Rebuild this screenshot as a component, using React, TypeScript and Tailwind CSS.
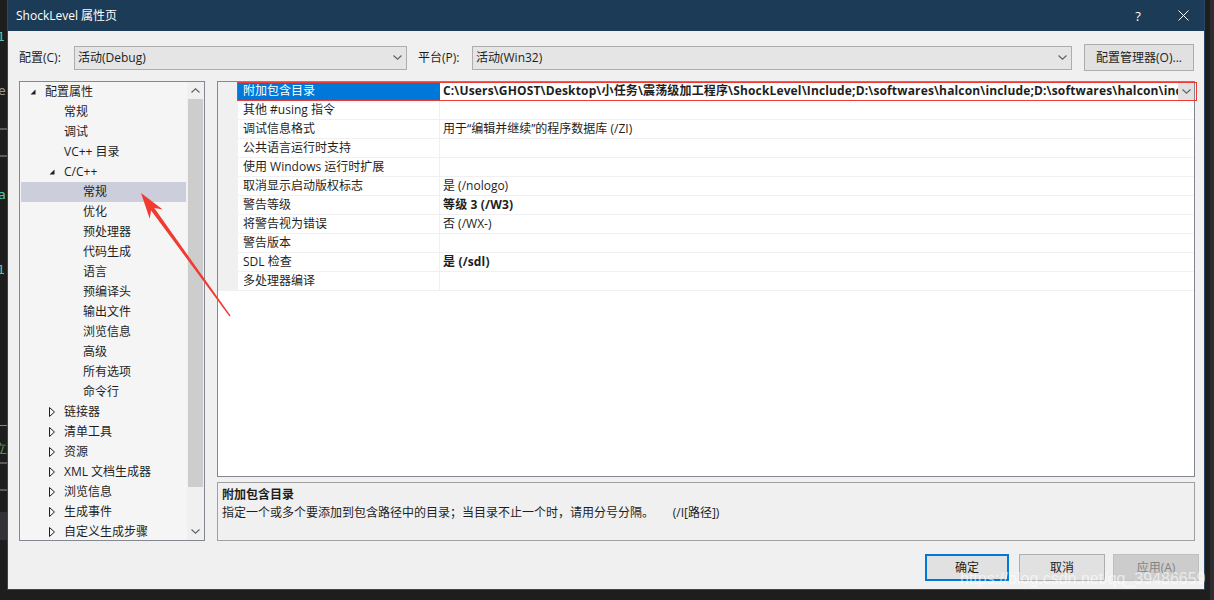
import React from 'react';

const font = "font-['Open_Sans','Noto_Sans_CJK_SC',sans-serif]";

type TreeItem = { label: string; level: number; state?: 'open' | 'closed'; selected?: boolean };

const treeItems: TreeItem[] = [
  { label: '配置属性', level: 0, state: 'open' },
  { label: '常规', level: 1 },
  { label: '调试', level: 1 },
  { label: 'VC++ 目录', level: 1 },
  { label: 'C/C++', level: 1, state: 'open' },
  { label: '常规', level: 2, selected: true },
  { label: '优化', level: 2 },
  { label: '预处理器', level: 2 },
  { label: '代码生成', level: 2 },
  { label: '语言', level: 2 },
  { label: '预编译头', level: 2 },
  { label: '输出文件', level: 2 },
  { label: '浏览信息', level: 2 },
  { label: '高级', level: 2 },
  { label: '所有选项', level: 2 },
  { label: '命令行', level: 2 },
  { label: '链接器', level: 1, state: 'closed' },
  { label: '清单工具', level: 1, state: 'closed' },
  { label: '资源', level: 1, state: 'closed' },
  { label: 'XML 文档生成器', level: 1, state: 'closed' },
  { label: '浏览信息', level: 1, state: 'closed' },
  { label: '生成事件', level: 1, state: 'closed' },
  { label: '自定义生成步骤', level: 1, state: 'closed' },
];

const indent = ['pl-[5px]', 'pl-[24px]', 'pl-[43px]'];

type Prop = { name: string; value?: string; bold?: boolean; selected?: boolean };

const props: Prop[] = [
  {
    name: '附加包含目录',
    value:
      'C:\\Users\\GHOST\\Desktop\\小任务\\震荡级加工程序\\ShockLevel\\Include;D:\\softwares\\halcon\\include;D:\\softwares\\halcon\\include\\halconcpp;%(AdditionalIncludeDirectories)',
    bold: true,
    selected: true,
  },
  { name: '其他 #using 指令' },
  { name: '调试信息格式', value: '用于“编辑并继续”的程序数据库 (/ZI)' },
  { name: '公共语言运行时支持' },
  { name: '使用 Windows 运行时扩展' },
  { name: '取消显示启动版权标志', value: '是 (/nologo)' },
  { name: '警告等级', value: '等级 3 (/W3)', bold: true },
  { name: '将警告视为错误', value: '否 (/WX-)' },
  { name: '警告版本' },
  { name: 'SDL 检查', value: '是 (/sdl)', bold: true },
  { name: '多处理器编译' },
];

const Chevron = ({ up = false }: { up?: boolean }) => (
  <svg width="9" height="5" viewBox="0 0 9 5" className="shrink-0">
    <path
      d={up ? 'M0.5 4.5 L4.5 0.8 L8.5 4.5' : 'M0.5 0.5 L4.5 4.2 L8.5 0.5'}
      fill="none"
      stroke="#606060"
      strokeWidth="1.1"
    />
  </svg>
);

const Combo = ({ text, width }: { text: string; width: string }) => (
  <div className={`flex h-[24px] ${width} items-center justify-between border border-[#adadad] bg-[#e5e5e5] pl-[3px] pr-[4px]`}>
    <span className="text-[12px] leading-[16px] text-[#1e1e1e]">{text}</span>
    <Chevron />
  </div>
);

const TreeRow = ({ item }: { item: TreeItem }) => (
  <div
    className={`flex h-[20px] shrink-0 items-center ${indent[item.level]} ${item.selected ? 'bg-[#cccedb]' : ''}`}
  >
    <div className="flex w-[19px] shrink-0 items-center pl-[4px]">
      {item.state === 'open' && (
        <svg width="6" height="6" viewBox="0 0 6 6">
          <polygon points="5.5,0.5 5.5,5.5 0.5,5.5" fill="#1e1e1e" />
        </svg>
      )}
      {item.state === 'closed' && (
        <svg width="7" height="10" viewBox="0 0 7 10">
          <polygon points="0.5,0.5 5.5,5 0.5,9.5" fill="none" stroke="#1e1e1e" strokeWidth="1" />
        </svg>
      )}
    </div>
    <span className="whitespace-nowrap text-[12px] leading-[16px] text-[#1e1e1e]">{item.label}</span>
  </div>
);

const PropRow = ({ p }: { p: Prop }) => (
  <div className="flex h-[19px] shrink-0">
    <div className="w-[20px] shrink-0 bg-[#f0f0f0]" />
    <div
      className={`flex w-[202px] shrink-0 items-center border-r border-b pl-[5px] text-[12px] leading-[16px] ${
        p.selected ? 'border-[#0078d7] bg-[#0078d7] text-white' : 'border-[#f0f0f0] text-[#1e1e1e]'
      }`}
    >
      <span className="whitespace-nowrap">{p.name}</span>
    </div>
    <div className="flex min-w-0 flex-1 items-center border-b border-[#f0f0f0] pl-[3px]">
      <span
        className={`min-w-0 flex-1 overflow-hidden whitespace-nowrap text-[12px] leading-[16px] text-[#1e1e1e] ${
          p.bold ? 'font-bold tracking-[0.15px]' : ''
        }`}
      >
        {p.value ?? ''}
      </span>
      {p.selected && (
        <div className="flex h-[17px] w-[16px] shrink-0 items-center justify-center bg-[#e1e1e1]">
          <Chevron />
        </div>
      )}
    </div>
  </div>
);

const EditorStrip = () => (
  <div className="flex h-[600px] w-[7px] shrink-0 flex-col overflow-hidden bg-[#1e1e1e] font-['DejaVu_Sans_Mono',monospace] text-[13px] leading-[14px]">
    <span className="mt-[30px] -ml-[3px] text-[#4ec9b0]">1</span>
    <span className="mt-[40px] -ml-[2px] text-[#9a9a9a]">e</span>
    <div className="mt-[30px] h-[2px] w-full bg-[#5a5a5a]" />
    <div className="mt-[25px] h-[2px] w-full bg-[#5a5a5a]" />
    <span className="mt-[31px] -ml-[2px] text-[#4ec9b0]">a</span>
    <span className="mt-[61px] -ml-[3px] text-[#4ec9b0]">1</span>
    <div className="mt-[148px] h-[1px] w-full bg-[#6a9955]" />
    <span className="mt-[16px] -ml-[6px] text-[#6a9955]">立</span>
    <div className="mt-[6px] h-[2px] w-full bg-[#5a5a5a]" />
    <div className="mt-[25px] h-[2px] w-full bg-[#5a5a5a]" />
    <div className="mt-[21px] h-[28px] w-full bg-[#333337]" />
  </div>
);

export default function App() {
  return (
    <div className={`relative flex h-[600px] w-[1214px] overflow-hidden bg-[#1e1e1e] ${font}`}>
      <EditorStrip />

      <div className="flex h-[590px] w-[1198px] shrink-0 flex-col border border-t-0 border-[#2b4a68] bg-[#f0f0f0]">
        {/* title bar */}
        <div className="flex h-[31px] shrink-0 items-center justify-between bg-[#1c3b57] pl-[8px]">
          <span className="text-[12px] leading-[16px] text-white">ShockLevel 属性页</span>
          <div className="flex h-full items-center">
            <span className="flex w-[48px] justify-center text-[13px] leading-[16px] text-white">?</span>
            <span className="flex w-[42px] justify-center">
              <svg width="11" height="11" viewBox="0 0 11 11">
                <path d="M0.5 0.5 L10.5 10.5 M10.5 0.5 L0.5 10.5" stroke="white" strokeWidth="1" />
              </svg>
            </span>
          </div>
        </div>

        {/* configuration row */}
        <div className="mt-[13px] flex h-[27px] shrink-0 items-center pl-[11px]">
          <span className="w-[55px] shrink-0 text-[12px] leading-[16px] text-[#1e1e1e]">配置(C):</span>
          <Combo text="活动(Debug)" width="w-[333px]" />
          <span className="ml-[11px] w-[54px] shrink-0 text-[12px] leading-[16px] text-[#1e1e1e]">平台(P):</span>
          <Combo text="活动(Win32)" width="w-[600px]" />
          <button className="ml-[12px] flex h-[27px] w-[110px] items-center justify-center border border-[#adadad] bg-[#e1e1e1] text-[12px] leading-[16px] text-[#1e1e1e]">
            配置管理器(O)...
          </button>
        </div>

        {/* main */}
        <div className="mt-[10px] flex h-[460px] shrink-0 gap-[12px] pl-[11px]">
          {/* tree */}
          <div className="flex h-[460px] w-[186px] shrink-0 border border-[#828790] bg-[#f5f5f5]">
            <div className="flex min-w-0 flex-1 flex-col overflow-hidden px-[1px]">
              {treeItems.map((item, i) => (
                <TreeRow key={i} item={item} />
              ))}
            </div>
            <div className="flex w-[17px] shrink-0 flex-col bg-[#f0f0f0]">
              <div className="flex h-[17px] items-center justify-center">
                <Chevron up />
              </div>
              <div className="mx-[1px] h-[388px] bg-[#cdcdcd]" />
              <div className="flex-1" />
              <div className="flex h-[17px] items-center justify-center">
                <Chevron />
              </div>
            </div>
          </div>

          {/* grid + description */}
          <div className="flex w-[978px] shrink-0 flex-col gap-[5px]">
            <div className="flex h-[396px] flex-col border border-[#828790] bg-white">
              {props.map((p, i) => (
                <PropRow key={i} p={p} />
              ))}
            </div>
            <div className="flex h-[59px] flex-col border border-[#a0a0a0] bg-[#f0f0f0] pt-[3px] pl-[4px]">
              <span className="text-[12px] leading-[18px] font-bold text-[#1e1e1e]">附加包含目录</span>
              <span className="whitespace-pre text-[12px] leading-[18px] text-[#1e1e1e]">
                {'指定一个或多个要添加到包含路径中的目录；当目录不止一个时，请用分号分隔。      (/I[路径])'}
              </span>
            </div>
          </div>
        </div>

        {/* buttons */}
        <div className="mt-[13px] flex h-[27px] shrink-0 justify-end pr-[5px]">
          <button className="flex w-[84px] items-center justify-center border-2 border-[#0078d7] bg-[#e1e1e1] text-[12px] leading-[16px] text-[#1e1e1e]">
            确定
          </button>
          <button className="ml-[10px] flex w-[86px] items-center justify-center border border-[#adadad] bg-[#e1e1e1] text-[12px] leading-[16px] text-[#1e1e1e]">
            取消
          </button>
          <button className="ml-[8px] flex w-[86px] items-center justify-center border border-[#bfbfbf] bg-[#cccccc] text-[12px] leading-[16px] text-[#838383]">
            应用(A)
          </button>
        </div>
      </div>

      <div className="flex h-[600px] flex-1 justify-end bg-[#1e1e1e]">
        <div className="w-[4px] bg-[#2d2d30]" />
      </div>

      {/* annotation: red frame around selected property */}
      <div className="pointer-events-none absolute top-[82px] left-[237px] h-[19px] w-[960px] border border-[#f03a36]" />

      {/* annotation: red arrow */}
      <svg className="pointer-events-none absolute top-0 left-0" width="1214" height="600" viewBox="0 0 1214 600">
        <polygon
          points="141,193 162.7,209.4 154.3,208 230.5,315.6 229.5,316.4 151.1,210.4 149.7,218.8"
          fill="#ef3b30"
        />
      </svg>

      {/* watermark */}
      <span className="pointer-events-none absolute top-[569px] left-[960px] font-['Liberation_Sans',sans-serif] text-[16px] leading-[20px] text-white/60">
        https://blog.csdn.net/qq_39486659
      </span>
    </div>
  );
}
